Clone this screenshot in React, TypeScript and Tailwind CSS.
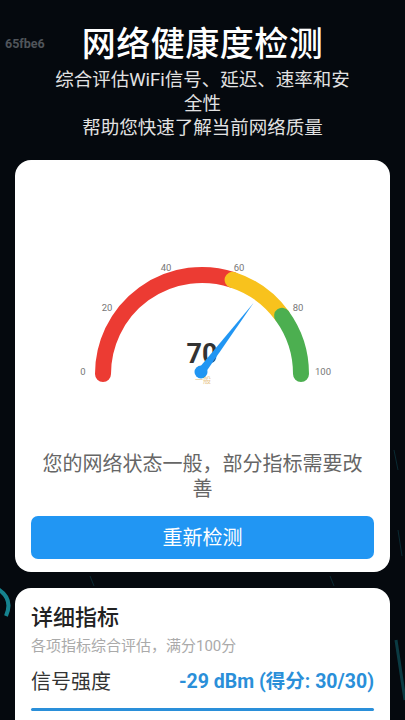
import React from 'react'

const CX = 171
const CY = 198
const R = 99

function pt(v: number, r: number = R) {
    const a = Math.PI * (1 - v / 100)
    return {x: CX + r * Math.cos(a), y: CY - r * Math.sin(a)}
}

function arc(from: number, to: number) {
    const a = pt(from)
    const b = pt(to)
    return `M${a.x.toFixed(1)} ${a.y.toFixed(1)} A${R} ${R} 0 0 1 ${b.x.toFixed(1)} ${b.y.toFixed(1)}`
}

const labels = [
    {t: '0', x: 52, y: 196},
    {t: '20', x: 76, y: 132},
    {t: '40', x: 135, y: 92},
    {t: '60', x: 208, y: 92},
    {t: '80', x: 267, y: 132},
    {t: '100', x: 292, y: 196},
]

function Gauge({value}: {value: number}) {
    const tip = pt(value, 88)
    const a = Math.PI * (1 - value / 100)
    const nx = Math.sin(a) * 4
    const ny = Math.cos(a) * 4
    const px = 170
    const py = 196
    return (
        <svg width="343" height="260" viewBox="0 0 343 260" className="block">
            <path d={arc(0, 60)} stroke="#ec3b33" strokeWidth="16" fill="none" strokeLinecap="round"/>
            <path d={arc(60, 80)} stroke="#f8c21d" strokeWidth="16" fill="none" strokeLinecap="round"/>
            <path d={arc(80, 100)} stroke="#4caf50" strokeWidth="16" fill="none" strokeLinecap="round"/>
            {labels.map((l) => (
                <text key={l.t} x={l.x} y={l.y} fontSize="9.5" fill="#777" textAnchor="middle"
                      dominantBaseline="middle" fontFamily="Roboto, sans-serif">{l.t}</text>
            ))}
            <text x="171" y="180" fontSize="27" fontWeight="700" fill="#333" textAnchor="middle"
                  dominantBaseline="middle" fontFamily="Roboto, 'Liberation Sans', sans-serif">{value}</text>
            <polygon
                points={`${(px - nx).toFixed(1)},${(py - ny).toFixed(1)} ${tip.x.toFixed(1)},${tip.y.toFixed(1)} ${(px + nx).toFixed(1)},${(py + ny).toFixed(1)}`}
                fill="#2196f3"/>
            <circle cx={px} cy={py} r="6.5" fill="#2196f3"/>
            <text x="172" y="207" fontSize="8" fill="#e6c07c" textAnchor="middle" opacity="0.85"
                  fontFamily="'Noto Sans CJK SC', sans-serif">一般</text>
        </svg>
    )
}

export default function App() {
    return (
        <div
            className="relative min-h-[720px] w-full overflow-hidden bg-[#05090e]"
            style={{fontFamily: "Roboto, 'Noto Sans CJK SC', sans-serif"}}
        >
            {/* faint network lines in the background */}
            <svg className="absolute inset-0 pointer-events-none" width="405" height="720" viewBox="0 0 405 720">
                <path d="M-4 588 Q14 598 6 616" stroke="#1aa3b0" strokeWidth="4" fill="none" opacity="0.8"/>
                <path d="M396 640 L405 700" stroke="#0f5d68" strokeWidth="3" fill="none" opacity="0.6"/>
                <path d="M394 450 L398 470 M398 530 L402 556" stroke="#0d4a55" strokeWidth="1" fill="none" opacity="0.5"/>
                <path d="M330 576 L334 586 M90 576 L94 586" stroke="#0d4a55" strokeWidth="1" fill="none" opacity="0.5"/>
            </svg>

            <div className="absolute left-[5px] top-[35px] text-[12.5px] font-bold text-[#50555b]">65fbe6</div>

            <div className="relative flex flex-col items-center pt-[24px] px-[15px]">
                <h1 className="text-[34px] leading-[40px] font-medium text-white tracking-[0.5px]">网络健康度检测</h1>
                <p className="mt-[4px] w-[302px] text-center text-[18.5px] leading-[24px] text-[#e2e2e2]">
                    综合评估WiFi信号、延迟、速率和安全性
                </p>
                <p className="text-center text-[18.5px] leading-[24px] text-[#e2e2e2]">帮助您快速了解当前网络质量</p>

                <div className="mt-[20px] w-full rounded-[16px] bg-white px-[16px] pt-[16px] pb-[13px]">
                    <Gauge value={70}/>
                    <p className="mt-[16px] px-[2px] text-center text-[20px] leading-[25px] text-[#666]">
                        您的网络状态一般，部分指标需要改善
                    </p>
                    <button
                        className="mt-[14px] h-[43px] w-full rounded-[7px] bg-[#2196f3] text-[20px] text-white">
                        重新检测
                    </button>
                </div>

                <div className="mt-[16px] w-full rounded-t-[16px] bg-white px-[16px] pt-[15px] pb-[20px]">
                    <h2 className="text-[22px] leading-[30px] font-medium text-[#222]">详细指标</h2>
                    <p className="mt-[3px] text-[15px] leading-[20px] text-[#aaa]">各项指标综合评估，满分100分</p>
                    <div className="mt-[13px] flex items-center justify-between">
                        <span className="text-[20px] leading-[26px] text-[#333]">信号强度</span>
                        <span className="text-[19.5px] leading-[26px] font-bold text-[#2a8fd9]">-29 dBm (得分: 30/30)</span>
                    </div>
                    <div className="mt-[13px] h-[3px] w-full rounded-full bg-[#2a8fd9]"/>
                </div>
            </div>
        </div>
    )
}
